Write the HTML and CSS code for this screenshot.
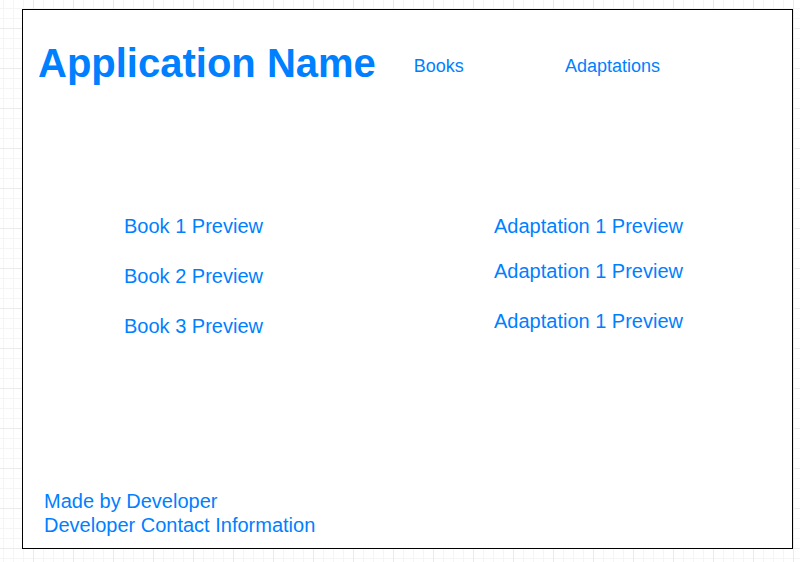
FILE: index.html
```html
<!DOCTYPE html>
<html>
<head>
<meta charset="utf-8">
<link rel="stylesheet" href="styles.css">
</head>
<body>
<div class="frame">
  <header class="header">
    <h1 class="title">Application Name</h1>
    <nav class="nav">
      <a class="nav-link nav-books">Books</a>
      <a class="nav-link nav-adapt">Adaptations</a>
    </nav>
  </header>
  <main class="lists">
    <ul class="list list-books">
      <li class="item">Book 1 Preview</li>
      <li class="item gap-50">Book 2 Preview</li>
      <li class="item gap-50">Book 3 Preview</li>
    </ul>
    <ul class="list list-adapt">
      <li class="item">Adaptation 1 Preview</li>
      <li class="item gap-45">Adaptation 1 Preview</li>
      <li class="item gap-50">Adaptation 1 Preview</li>
    </ul>
  </main>
  <footer class="footer">
    <p class="footer-line">Made by Developer</p>
    <p class="footer-line">Developer Contact Information</p>
  </footer>
</div>
</body>
</html>
```

FILE: styles.css
```css
* { box-sizing: border-box; }
html, body { margin: 0; padding: 0; }
body {
  width: 800px;
  height: 562px;
  overflow: hidden;
  font-family: "Liberation Sans", Arial, Helvetica, sans-serif;
  color: #007fff;
  background-color: #ffffff;
  background-image:
    linear-gradient(to right, #ebebeb 1px, transparent 1px),
    linear-gradient(to bottom, #ebebeb 1px, transparent 1px),
    linear-gradient(to right, #f5f5f5 1px, transparent 1px),
    linear-gradient(to bottom, #f5f5f5 1px, transparent 1px);
  background-size: 40px 40px, 40px 40px, 10px 10px, 10px 10px;
  background-position: 33px 28px, 33px 28px, 3px 8px, 3px 8px;
  padding-top: 9px;
  padding-left: 22px;
}
.frame {
  width: 771px;
  height: 540px;
  border: 1px solid #000;
  background: #fff;
  display: flex;
  flex-direction: column;
}
.header {
  display: flex;
  align-items: flex-start;
  padding: 30px 0 0 15px;
}
.title {
  margin: 0;
  font-size: 40px;
  line-height: 46px;
  font-weight: bold;
  white-space: nowrap;
}
.nav {
  display: flex;
  margin-top: 16px;
  margin-left: 38px;
}
.nav-link {
  font-size: 18px;
  line-height: 21px;
}
.nav-adapt { margin-left: 101px; }
.lists {
  display: grid;
  grid-template-columns: 370px 1fr;
  padding: 128px 0 0 101px;
}
.list {
  list-style: none;
  margin: 0;
  padding: 0;
}
.item {
  font-size: 20px;
  line-height: 24px;
  white-space: nowrap;
}
.gap-50 { margin-top: 26px; }
.gap-45 { margin-top: 21px; }
.footer {
  margin-top: auto;
  padding: 0 0 11px 21px;
}
.footer-line {
  margin: 0;
  font-size: 20px;
  line-height: 24px;
}
```
